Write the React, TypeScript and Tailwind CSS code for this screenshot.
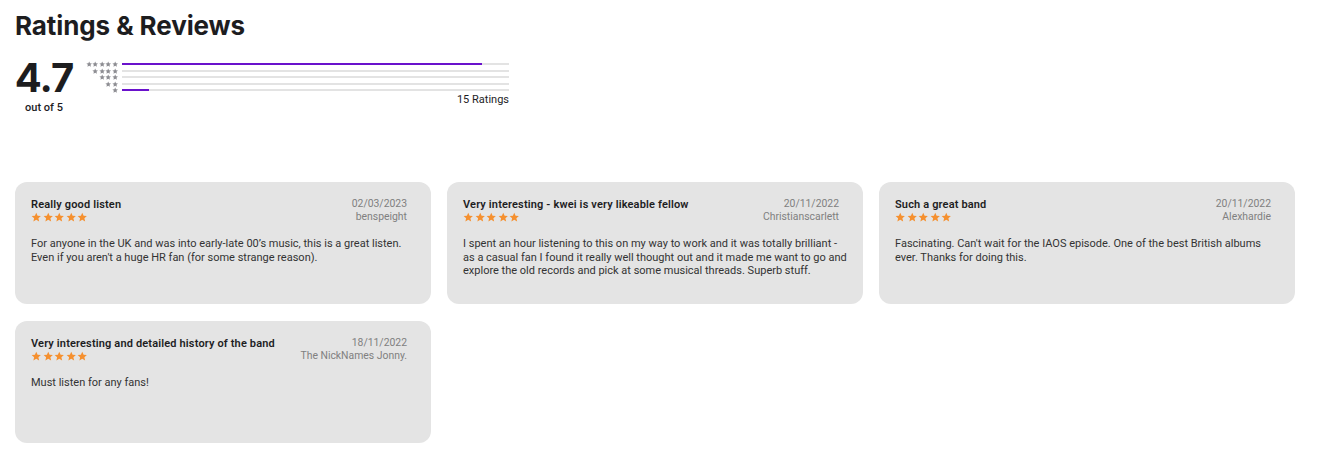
import React from "react";

const reviews = [
  {
    title: "Really good listen",
    date: "02/03/2023",
    user: "benspeight",
    body: "For anyone in the UK and was into early-late 00’s music, this is a great listen. Even if you aren't a huge HR fan (for some strange reason).",
  },
  {
    title: "Very interesting - kwei is very likeable fellow",
    date: "20/11/2022",
    user: "Christianscarlett",
    body: "I spent an hour listening to this on my way to work and it was totally brilliant - as a casual fan I found it really well thought out and it made me want to go and explore the old records and pick at some musical threads. Superb stuff.",
  },
  {
    title: "Such a great band",
    date: "20/11/2022",
    user: "Alexhardie",
    body: "Fascinating. Can't wait for the IAOS episode. One of the best British albums ever. Thanks for doing this.",
  },
  {
    title: "Very interesting and detailed history of the band",
    date: "18/11/2022",
    user: "The NickNames Jonny.",
    body: "Must listen for any fans!",
  },
];

function Star({ size, color }: { size: number; color: string }) {
  return (
    <svg width={size} height={size} viewBox="0 0 24 24">
      <path
        d="M12 1.8l3.1 6.9 7.4.7-5.6 5 1.7 7.4L12 17.9l-6.6 3.9 1.7-7.4-5.6-5 7.4-.7z"
        fill={color}
      />
    </svg>
  );
}

const hist = [
  { n: 5, pct: 93 },
  { n: 4, pct: 0 },
  { n: 3, pct: 0 },
  { n: 2, pct: 0 },
  { n: 1, pct: 7 },
];

export default function App() {
  return (
    <div
      className="bg-white text-[#1d1d1f] pl-[15px] pt-[10px]"
      style={{ fontFamily: "Inter, 'Noto Sans', sans-serif" }}
    >
      <h1 className="text-[26px] font-bold leading-[32px] tracking-[-0.1px]">Ratings &amp; Reviews</h1>
      <div className="flex mt-[16px] h-[124px]">
        <div className="flex flex-col items-center w-[58px]">
          <div className="text-[40px] font-bold leading-[40px] tracking-[-1px]">4.7</div>
          <div
            className="text-[11px] font-medium leading-[14px] mt-[3px] text-[#1d1d1f]"
            style={{ fontFamily: "Roboto, sans-serif" }}
          >
            out of 5
          </div>
        </div>
        <div className="ml-[13px] mt-[3px] flex flex-col">
          {hist.map((h) => (
            <div key={h.n} className="flex items-center h-[6.5px]">
              <div className="w-[32px] flex justify-end">
                {Array.from({ length: h.n }).map((_, i) => (
                  <Star key={i} size={6.4} color="#8e8e93" />
                ))}
              </div>
              <div className="ml-[4px] w-[387px] h-[2px] bg-[#e3e3e3]">
                <div className="h-full bg-[#6a12cc]" style={{ width: `${h.pct}%` }} />
              </div>
            </div>
          ))}
          <div
            className="text-right text-[11px] leading-[14px] -mt-[1px] text-[#1d1d1f]"
            style={{ fontFamily: "Roboto, sans-serif" }}
          >
            15 Ratings
          </div>
        </div>
      </div>
      <div
        className="grid grid-cols-[416px_416px_416px] gap-x-[16px] gap-y-[17px]"
        style={{ fontFamily: "Roboto, 'Noto Sans', sans-serif" }}
      >
        {reviews.map((r, i) => (
          <div key={i} className="bg-[#e4e4e4] rounded-[12px] h-[122px] pl-[16px] pr-[16px] pt-[16px]">
            <div className="flex justify-between pr-[8px]">
              <div className="whitespace-nowrap">
                <div className="text-[11px] font-semibold leading-[13px] text-[#1d1d1f] tracking-[0.15px]">{r.title}</div>
                <div className="flex gap-[1px] mt-[1px]">
                  {Array.from({ length: 5 }).map((_, k) => (
                    <Star key={k} size={10.5} color="#f5902f" />
                  ))}
                </div>
              </div>
              <div className="shrink-0 whitespace-nowrap text-right text-[10.4px] leading-[12.5px] text-[#808080]">
                <div>{r.date}</div>
                <div>{r.user}</div>
              </div>
            </div>
            <p className="mt-[14px] text-[11px] leading-[13.5px] text-[#333333]">{r.body}</p>
          </div>
        ))}
      </div>
    </div>
  );
}
